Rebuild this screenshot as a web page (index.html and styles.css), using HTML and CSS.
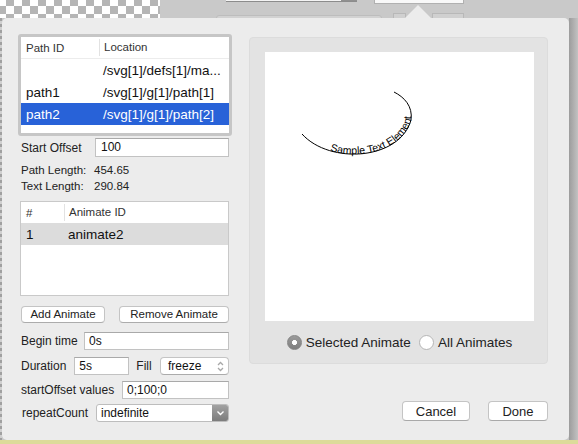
FILE: index.html
```html
<!DOCTYPE html>
<html>
<head>
<meta charset="utf-8">
<link rel="stylesheet" href="styles.css">
</head>
<body>
<div class="screen">
  <div class="topstrip">
    <div class="checker"></div>
    <div class="frag frag-a"></div>
    <div class="frag frag-b"></div>
    <div class="frag frag-c"></div>
    <div class="frag frag-d"></div>
    <div class="frag frag-e"></div>
  </div>
  <div class="middle">
    <div class="leftedge"></div>
    <div class="panel">
      <div class="arrow"></div>
      <div class="leftcol">
        <div class="pathtable">
          <div class="thead"><div class="c1">Path ID</div><div class="c2">Location</div></div>
          <div class="trow"><div class="c1"></div><div class="c2">/svg[1]/defs[1]/ma...</div></div>
          <div class="trow"><div class="c1">path1</div><div class="c2">/svg[1]/g[1]/path[1]</div></div>
          <div class="trow sel"><div class="c1">path2</div><div class="c2">/svg[1]/g[1]/path[2]</div></div>
        </div>
        <div class="field f-start"><span class="lbl">Start Offset</span><div class="input w-start">100</div></div>
        <div class="info">
          <div class="inforow"><span class="k">Path Length:</span><span>454.65</span></div>
          <div class="inforow"><span class="k">Text Length:</span><span>290.84</span></div>
        </div>
        <div class="animtable">
          <div class="thead"><div class="a1">#</div><div class="a2">Animate ID</div></div>
          <div class="arow"><div class="a1">1</div><div class="a2">animate2</div></div>
        </div>
        <div class="btnrow">
          <button class="btn w-add">Add Animate</button>
          <button class="btn w-rem">Remove Animate</button>
        </div>
        <div class="field f-begin"><span class="lbl">Begin time</span><div class="input w-begin">0s</div></div>
        <div class="field f-dur">
          <span class="lbl">Duration</span>
          <div class="input w-dur">5s</div>
          <span class="lbl fill">Fill</span>
          <div class="select w-fill">
            <span>freeze</span>
            <svg class="stepper" width="9" height="13" viewBox="0 0 9 13"><path d="M2 5 L4.5 2.5 L7 5 M2 8 L4.5 10.5 L7 8" fill="none" stroke="#a8a8a8" stroke-width="1.3"/></svg>
          </div>
        </div>
        <div class="field f-sov"><span class="lbl">startOffset values</span><div class="input w-sov">0;100;0</div></div>
        <div class="field f-rep">
          <span class="lbl rep">repeatCount</span>
          <div class="popup w-rep">
            <span class="ptext">indefinite</span>
            <span class="pbutton"><svg width="9" height="6" viewBox="0 0 9 6"><path d="M1.5 1.5 L4.5 4.5 L7.5 1.5" fill="none" stroke="#fff" stroke-width="1.4"/></svg></span>
          </div>
        </div>
      </div>
      <div class="rightcol">
        <div class="group">
          <div class="canvas">
            <svg width="269" height="269" viewBox="0 0 269 269">
              <path id="arc" d="M37 82 C65 113 135 108 146 68 C148 54 139 45 129 40" fill="none" stroke="#000" stroke-width="1"/>
              <text font-family="Liberation Sans, Arial, sans-serif" font-size="10.5" fill="#000"><textPath href="#arc" startOffset="33">Sample Text Element</textPath></text>
            </svg>
          </div>
          <div class="radios">
            <span class="radio on"></span><span class="rlabel first">Selected Animate</span>
            <span class="radio"></span><span class="rlabel">All Animates</span>
          </div>
        </div>
        <div class="actions">
          <button class="pbtn cancel">Cancel</button>
          <button class="pbtn done">Done</button>
        </div>
      </div>
    </div>
    <div class="rightedge"></div>
  </div>
  <div class="bottomstrip"></div>
</div>
</body>
</html>
```
FILE: styles.css
```css
* { box-sizing: border-box; }
html, body { margin: 0; padding: 0; }
body {
  width: 578px; height: 444px; overflow: hidden;
  font-family: "Liberation Sans", Arial, sans-serif;
  color: #222; background: #c8c8c8;
}
.screen { width: 578px; height: 444px; display: flex; flex-direction: column; }

.topstrip { height: 18px; flex: none; position: relative; background: #c9c9c9; }
.checker {
  width: 160px; height: 18px;
  background: repeating-conic-gradient(#b5b5b5 0 25%, #ffffff 0 50%) -2px -2px / 16px 16px;
}
.frag { position: absolute; }
.frag-a { left: 226px; top: 0; width: 131px; height: 2px; background: linear-gradient(to right, #f4f4f4 88%, #909090 88%); border-bottom: 1px solid #8c8c8c; }
.frag-b { left: 374px; top: 0; width: 90px; height: 4px; background: #f8f8f8; border: 1px solid #b0b0b0; border-top: none; }
.frag-c { left: 216px; top: 15px; width: 166px; height: 4px; background: #d2d2d2; border: 1px solid #bdbdbd; border-radius: 3px 3px 0 0; }
.frag-d { left: 393px; top: 13px; width: 13px; height: 6px; background: #d0d0d0; border: 1px solid #b8b8b8; }
.frag-e { left: 432px; top: 13px; width: 32px; height: 6px; background: #d0d0d0; border: 1px solid #b8b8b8; }

.middle { flex: 1; display: flex; }
.leftedge { width: 2px; background: repeating-linear-gradient(#a0a0a0 0 3px, #cfcfcf 3px 6px); }
.rightedge { flex: 1; background: linear-gradient(to right, #9c9c9c, #c2c2c2); }
.bottomstrip { height: 4px; flex: none; background: #dcdb9a; }

.panel {
  width: 567px; height: 422px; position: relative;
  background: #ececec; border-radius: 5px;
  display: flex; gap: 17px; padding: 16px 21px 0 16px;
}
.arrow {
  position: absolute; left: 403px; top: -13px; width: 26px; height: 13px;
  background: #ececec; clip-path: polygon(50% 0, 100% 100%, 0 100%);
}

/* left column */
.leftcol { width: 214px; display: flex; flex-direction: column; }
.pathtable {
  height: 102px; background: #fff;
  border: 3px solid #c6c6c6; border-radius: 3px;
}
.thead { height: 22px; display: flex; align-items: center; font-size: 11.5px; color: #333; border-bottom: 1px solid #ececec; }
.c1 { width: 78px; padding-left: 5px; flex: none; }
.c2 { flex: 1; padding-left: 4px; white-space: nowrap; overflow: hidden; }
.thead .c2 { border-left: 1px solid #e2e2e2; line-height: 17px; }
.trow { height: 22px; display: flex; align-items: center; font-size: 13.5px; color: #111; }
.trow.sel { background: #2862d8; color: #fff; }

.field { display: flex; align-items: center; justify-content: space-between; margin: 0 3px; font-size: 12px; }
.lbl { white-space: nowrap; }
.input {
  height: 18px; background: #fff; border: 1px solid #c2c2c2; border-top-color: #a9a9a9;
  font-size: 12px; line-height: 16px; padding-left: 4px; color: #111;
}
.f-start { margin-top: 2px; }
.f-start .input { height: 19px; line-height: 17px; padding-left: 5px; }
.w-start { width: 134px; }
.info { margin: 5px 3px 0; font-size: 11.5px; }
.inforow { height: 16px; line-height: 16px; display: flex; }
.k { width: 73px; flex: none; }

.animtable {
  margin: 7px 3px 0 2px; height: 95px; background: #fff; border: 1px solid #c9c9c9;
}
.a1 { width: 43px; padding-left: 5px; flex: none; }
.a2 { flex: 1; padding-left: 4px; }
.animtable .thead { border-bottom: none; height: 21px; }
.animtable .thead .a2 { border-left: 1px solid #e2e2e2; line-height: 17px; }
.arow { height: 22px; display: flex; align-items: center; background: #dcdcdc; font-size: 13.5px; color: #111; }

.btnrow { margin: 10px 3px 0; display: flex; justify-content: space-between; }
.btn {
  height: 17px; padding: 0; background: #fff; font-family: inherit; font-size: 11.5px; color: #222;
  border: 1px solid #c4c4c4; border-bottom-color: #acacac; border-radius: 4px; line-height: 15px;
}
.w-add { width: 84px; }
.w-rem { width: 110px; }

.f-begin { margin-top: 9px; }
.w-begin { width: 145px; }
.f-dur { margin-top: 7px; justify-content: flex-start; }
.w-dur { width: 55px; margin-left: 8px; }
.fill { margin-left: 7px; }
.select {
  margin-left: auto; height: 18px; background: #fff; border: 1px solid #c4c4c4; border-bottom-color: #ababab;
  border-radius: 4px; display: flex; align-items: center; justify-content: space-between;
  padding: 0 3px 0 7px; font-size: 12px; color: #111;
}
.w-fill { width: 69px; }
.f-sov { margin-top: 6px; }
.w-sov { width: 107px; }
.f-rep { margin-top: 5px; }
.rep { padding-left: 1px; }
.popup {
  height: 18px; background: #fff; border: 1px solid #bdbdbd; border-radius: 3px;
  display: flex; align-items: stretch; font-size: 12px; color: #111; overflow: hidden;
}
.w-rep { width: 133px; }
.ptext { flex: 1; padding-left: 4px; line-height: 16px; }
.pbutton {
  width: 16px; display: flex; align-items: center; justify-content: center;
  background: linear-gradient(#a2a2a2, #7c7c7c);
}

/* right column */
.rightcol { width: 299px; display: flex; flex-direction: column; }
.group {
  margin-top: 3px; height: 327px; background: #e3e3e3; border: 1px solid #dcdcdc; border-radius: 4px;
  padding: 14px 13px 0 15px; display: flex; flex-direction: column;
}
.canvas { width: 269px; height: 269px; background: #fff; }
.canvas svg { display: block; }
.radios { height: 43px; display: flex; align-items: center; justify-content: center; font-size: 13.5px; color: #222; }
.radio {
  width: 15px; height: 15px; border-radius: 50%; background: #fff; border: 1px solid #b5b5b5; flex: none;
}
.radio.on {
  background: radial-gradient(circle, #fff 0 2.2px, transparent 2.8px), linear-gradient(#9a9a9a, #7f7f7f);
  border-color: #858585;
}
.rlabel { margin-left: 4px; }
.rlabel.first { margin-right: 8px; }

.actions { margin-top: 37px; display: flex; justify-content: flex-end; gap: 18px; }
.pbtn {
  height: 20px; padding: 0; background: #fff; font-family: inherit; font-size: 13px; color: #222;
  border: 1px solid #c4c4c4; border-bottom-color: #a9a9a9; border-radius: 4px;
}
.cancel { width: 68px; }
.done { width: 60px; }
```
